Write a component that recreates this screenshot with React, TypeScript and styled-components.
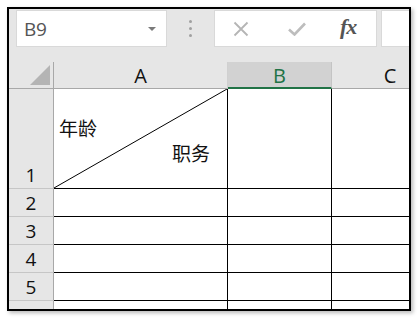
import { styled, createGlobalStyle } from 'styled-components'

const GlobalStyle = createGlobalStyle`
	html, body {
		margin: 0;
		padding: 0;
		background: #ffffff;
	}
	body {
		font-family: 'Open Sans', 'Noto Sans', 'Noto Sans CJK SC', sans-serif;
	}
`

const columns = ['A', 'B', 'C']
const rows = [2, 3, 4, 5]

export default function App() {
	return (
		<Page>
			<GlobalStyle />
			<Frame>
				<Toolbar>
					<NameBox>
						<NameText>B9</NameText>
						<DropArrow />
					</NameBox>
					<Grip>
						<Dot />
						<Dot />
						<Dot />
					</Grip>
					<FormulaButtons>
						<IconSlot $w={55}>
							<svg width="16" height="16" viewBox="0 0 16 16">
								<path d="M1.5 1.5 L14.5 14.5 M14.5 1.5 L1.5 14.5" stroke="#b5b5b5" strokeWidth="1.8" fill="none" />
							</svg>
						</IconSlot>
						<IconSlot $w={52}>
							<svg width="18" height="14" viewBox="0 0 18 14">
								<path d="M1 7.5 L6.5 12.5 L17 1.5" stroke="#bdbdbd" strokeWidth="2.6" fill="none" />
							</svg>
						</IconSlot>
						<Fx>fx</Fx>
					</FormulaButtons>
					<FormulaInput />
				</Toolbar>
				<Sheet>
					<Corner>
						<SelectAll />
					</Corner>
					{columns.map((c) => (
						<ColHeader key={c} $selected={c === 'B'}>
							{c}
						</ColHeader>
					))}
					<RowHeader>1</RowHeader>
					<DiagonalCell>
						<Diagonal viewBox="0 0 100 100" preserveAspectRatio="none">
							<line x1="0" y1="100" x2="100" y2="0" stroke="#000" strokeWidth="1" vectorEffect="non-scaling-stroke" />
						</Diagonal>
						<TopLabel>年龄</TopLabel>
						<BottomLabel>职务</BottomLabel>
					</DiagonalCell>
					<Cell />
					<Cell />
					{rows.map((r) => (
						<Row key={r}>
							<RowHeader>{r}</RowHeader>
							<Cell />
							<Cell />
							<Cell />
						</Row>
					))}
					<RowHeader $partial />
					<Cell $partial />
					<Cell $partial />
					<Cell $partial />
				</Sheet>
			</Frame>
		</Page>
	)
}

const Page = styled.div`
	padding: 7px;
	width: 418px;
	height: 318px;
	box-sizing: border-box;
`

const Frame = styled.div`
	width: 404px;
	height: 304px;
	box-sizing: border-box;
	border: 2px solid #000;
	background: #e6e6e6;
	box-shadow: 2px 2px 4px rgba(0, 0, 0, 0.28);
	overflow: hidden;
	display: flex;
	flex-direction: column;
`

const Toolbar = styled.div`
	display: flex;
	align-items: flex-start;
	padding: 1px 0 0 7px;
	height: 53px;
	box-sizing: border-box;
	flex-shrink: 0;
`

const NameBox = styled.div`
	width: 151px;
	height: 37px;
	box-sizing: border-box;
	background: #fff;
	border: 1px solid #d9d9d9;
	display: flex;
	align-items: center;
	justify-content: space-between;
	padding: 0 10px 0 7px;
`

const NameText = styled.span`
	font-size: 19px;
	color: #555;
	letter-spacing: -0.3px;
`

const DropArrow = styled.span`
	width: 0;
	height: 0;
	border-left: 4px solid transparent;
	border-right: 4px solid transparent;
	border-top: 4px solid #7a7a7a;
	margin-top: 1px;
`

const Grip = styled.div`
	width: 47px;
	height: 37px;
	display: flex;
	flex-direction: column;
	align-items: center;
	justify-content: center;
	gap: 4px;
`

const Dot = styled.span`
	width: 3px;
	height: 3px;
	border-radius: 50%;
	background: #a0a0a0;
`

const FormulaButtons = styled.div`
	width: 163px;
	height: 37px;
	box-sizing: border-box;
	background: #fff;
	border: 1px solid #d9d9d9;
	display: flex;
	align-items: center;
	padding: 0 0 0 18px;
`

const IconSlot = styled.span<{ $w: number }>`
	width: ${(p) => p.$w}px;
	display: flex;
	align-items: center;
	justify-content: flex-start;
`

const Fx = styled.span`
	font-family: 'Liberation Serif', 'DejaVu Serif', serif;
	font-style: italic;
	font-weight: bold;
	font-size: 22px;
	color: #555;
	margin-top: -3px;
	letter-spacing: -1px;
`

const FormulaInput = styled.div`
	flex: 1;
	height: 37px;
	margin-left: 4px;
	box-sizing: border-box;
	background: #fff;
	border: 1px solid #d9d9d9;
	border-right: none;
`

const Sheet = styled.div`
	flex: 1;
	width: 440px;
	display: grid;
	grid-template-columns: 45px 174px 104px 117px;
	grid-template-rows: 27px 100px 28px 28px 28px 28px 1fr;
	background: #fff;
`

const Row = styled.div`
	display: contents;
`

const Corner = styled.div`
	background: #e6e6e6;
	border-right: 1px solid #a8a8a8;
	border-bottom: 1px solid #a8a8a8;
	display: flex;
	align-items: flex-end;
	justify-content: flex-end;
	padding: 0 3px 3px 0;
`

const SelectAll = styled.span`
	width: 0;
	height: 0;
	border-left: 20px solid transparent;
	border-bottom: 20px solid #b4b4b4;
`

const ColHeader = styled.div<{ $selected?: boolean }>`
	background: ${(p) => (p.$selected ? '#d2d2d2' : '#e6e6e6')};
	color: ${(p) => (p.$selected ? '#217346' : '#111')};
	border-right: 1px solid ${(p) => (p.$selected ? '#c4c4c4' : '#d0d0d0')};
	border-bottom: ${(p) => (p.$selected ? '2px solid #217346' : '1px solid #a8a8a8')};
	font-size: 20px;
	display: flex;
	align-items: center;
	justify-content: center;
	padding-top: 1px;
`

const RowHeader = styled.div<{ $partial?: boolean }>`
	background: #e6e6e6;
	border-right: 1px solid #a8a8a8;
	border-bottom: ${(p) => (p.$partial ? 'none' : '1px solid #c6c6c6')};
	font-size: 19px;
	color: #111;
	display: flex;
	align-items: flex-end;
	justify-content: center;
	line-height: 26px;
`

const Cell = styled.div<{ $partial?: boolean }>`
	border-right: 1px solid #000;
	border-bottom: ${(p) => (p.$partial ? 'none' : '1px solid #000')};
`

const DiagonalCell = styled.div`
	position: relative;
	border-right: 1px solid #000;
	border-bottom: 1px solid #000;
	font-family: 'Noto Sans CJK SC', sans-serif;
	font-size: 19px;
	line-height: 24px;
	color: #111;
	display: flex;
	flex-direction: column;
	padding: 27px 17px 0 5px;
`

const Diagonal = styled.svg`
	position: absolute;
	left: 0;
	top: 0;
	width: 100%;
	height: 100%;
`

const TopLabel = styled.span`
	align-self: flex-start;
`

const BottomLabel = styled.span`
	align-self: flex-end;
	margin-top: 1px;
`
